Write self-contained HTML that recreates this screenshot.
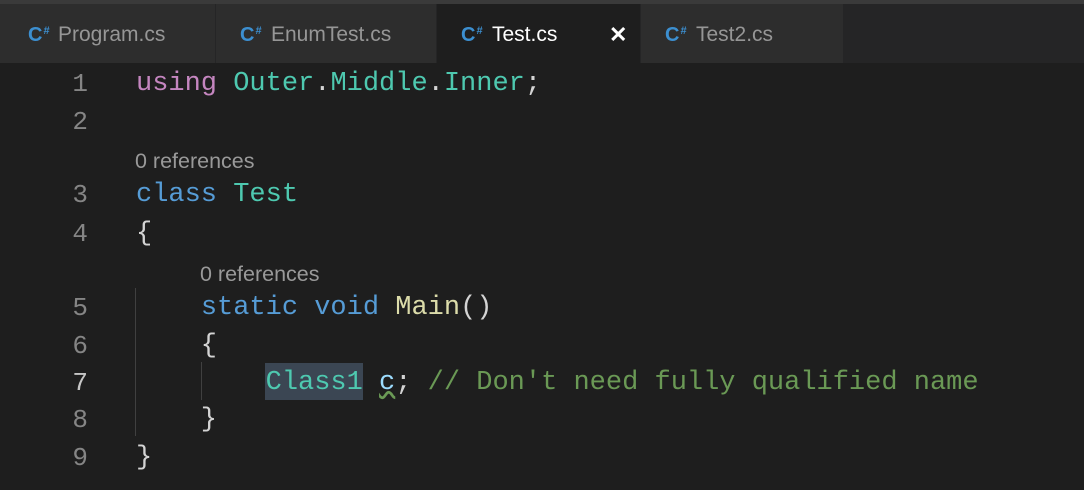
<!DOCTYPE html><html><head><style>
body{margin:0;width:1084px;height:490px;background:#1e1e1e;overflow:hidden;position:relative;font-family:"Liberation Mono",monospace}
.top{position:absolute;left:0;top:0;width:1084px;height:4px;background:#3a3a3a}
.bar{position:absolute;left:0;top:4px;width:1084px;height:59px;background:#252526}
.tab{position:absolute;top:4px;height:59px;background:#2d2d2d;font-family:"Liberation Sans",sans-serif;font-size:21px;color:#969696;line-height:62px}
.tab b{position:absolute;top:0;color:#3c8fd0;font-size:20px;font-weight:bold}
.tab b i{font-style:normal;font-size:11px;position:relative;top:-7px;left:1px}
.tab span{position:absolute}
.ln{position:absolute;width:88px;text-align:right;color:#858585;font-size:26px;height:38px;line-height:38px}
.c{position:absolute;left:136px;font-size:27px;white-space:pre;color:#d4d4d4;height:38px;line-height:38px}
.lens{position:absolute;font-family:"Liberation Sans",sans-serif;font-size:21.5px;color:#999;line-height:24px}
.k{color:#569cd6}.p{color:#c586c0}.t{color:#4ec9b0}.f{color:#dcdcaa}.g{color:#6a9955}.v{color:#9cdcfe}
.guide{position:absolute;width:1px;background:#404040}
</style></head><body>
<div class="top"></div><div class="bar"></div>
<div class="tab" style="left:0;width:215px"><b style="left:28px">C<i>#</i></b><span style="left:58px">Program.cs</span></div>
<div class="tab" style="left:216px;width:220px"><b style="left:24px">C<i>#</i></b><span style="left:55px">EnumTest.cs</span></div>
<div class="tab" style="left:437px;width:203px;background:#1e1e1e;color:#fff"><b style="left:24px">C<i>#</i></b><span style="left:55px">Test.cs</span><span style="left:172px;font-size:22px;font-weight:bold">✕</span></div>
<div class="tab" style="left:641px;width:202px"><b style="left:24px">C<i>#</i></b><span style="left:55px">Test2.cs</span></div>

<div class="guide" style="left:135px;top:288px;height:148px"></div>
<div class="guide" style="left:201px;top:362px;height:38px"></div>
<div style="position:absolute;left:265px;top:363px;width:98px;height:37px;background:#3b4653"></div>

<div class="ln" style="top:65px">1</div><div class="c" style="top:65px"><span class="p">using</span> <span class="t">Outer</span>.<span class="t">Middle</span>.<span class="t">Inner</span>;</div>
<div class="ln" style="top:103px">2</div>
<div class="lens" style="left:135px;top:149px">0 references</div>
<div class="ln" style="top:176px">3</div><div class="c" style="top:176px"><span class="k">class</span> <span class="t">Test</span></div>
<div class="ln" style="top:215px">4</div><div class="c" style="top:215px">{</div>
<div class="lens" style="left:200px;top:262px">0 references</div>
<div class="ln" style="top:289px">5</div><div class="c" style="top:289px">    <span class="k">static</span> <span class="k">void</span> <span class="f">Main</span>()</div>
<div class="ln" style="top:327px">6</div><div class="c" style="top:327px">    {</div>
<div class="ln" style="top:364px;color:#c6c6c6">7</div><div class="c" style="top:364px">        <span class="t">Class1</span> <span class="v" style="text-decoration:underline wavy #6a9955">c</span>; <span class="g">// Don't need fully qualified name</span></div>
<div class="ln" style="top:401px">8</div><div class="c" style="top:401px">    }</div>
<div class="ln" style="top:439px">9</div><div class="c" style="top:439px">}</div>
</body></html>
